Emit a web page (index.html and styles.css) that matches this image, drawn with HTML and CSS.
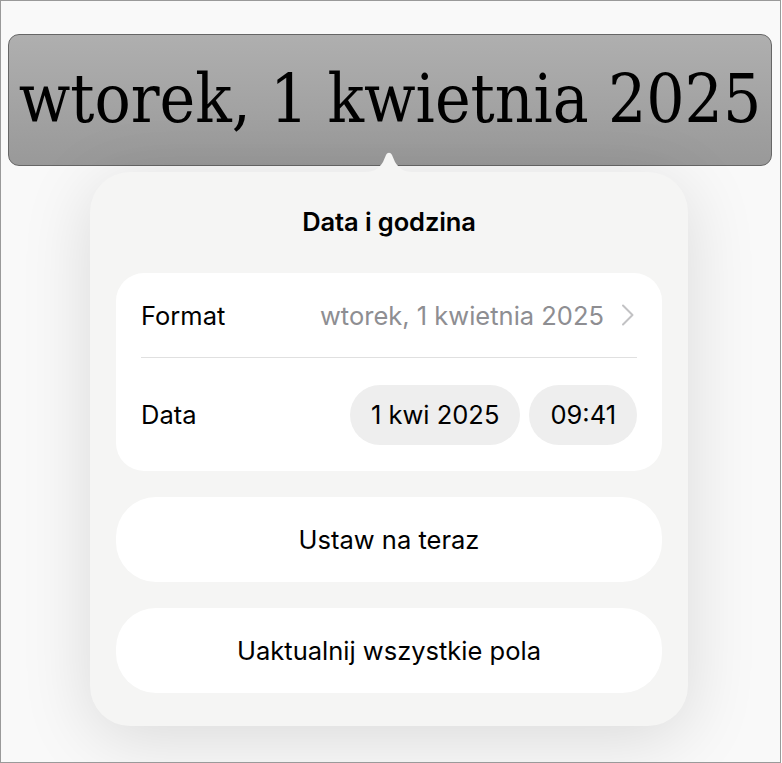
FILE: index.html
```html
<!DOCTYPE html>
<html lang="pl">
<head>
<meta charset="utf-8">
<title>Data i godzina</title>
<link rel="stylesheet" href="styles.css">
</head>
<body>
<div class="frame">
  <div class="field">wtorek, 1 kwietnia 2025</div>
  <div class="popover">
    <svg class="popover-arrow" width="48" height="24" viewBox="0 0 48 24" aria-hidden="true">
      <path d="M0 22 C10 22 14 18 18 12 L21 5 C22.5 2 25.5 2 27 5 L30 12 C34 18 38 22 48 22 L48 24 L0 24 Z" fill="#f5f5f4"/>
    </svg>
    <h1 class="popover-title">Data i godzina</h1>
    <div class="card">
      <div class="row">
        <span class="row-label">Format</span>
        <span class="row-value">wtorek, 1 kwietnia 2025</span>
        <svg class="chevron" width="14" height="22" viewBox="0 0 14 22" aria-hidden="true">
          <path d="M2 1.5 L11.5 11 L2 20.5" fill="none" stroke="#c2c2c4" stroke-width="2" stroke-linecap="round" stroke-linejoin="round"/>
        </svg>
      </div>
      <div class="divider"></div>
      <div class="row">
        <span class="row-label">Data</span>
        <span class="pills">
          <span class="pill">1 kwi 2025</span>
          <span class="pill">09:41</span>
        </span>
      </div>
    </div>
    <button class="action">Ustaw na teraz</button>
    <button class="action">Uaktualnij wszystkie pola</button>
  </div>
</div>
</body>
</html>
```

FILE: styles.css
```css
html, body {
  margin: 0;
  padding: 0;
  background: #ffffff;
}

.frame {
  box-sizing: border-box;
  width: 781px;
  height: 763px;
  border: 1px solid #9a9a9a;
  background: #f9f9f9;
  padding: 33px 8px 0 7px;
  overflow: hidden;
  font-family: Inter, "Noto Sans", sans-serif;
  color: #000;
}

/* selected date field in the document */
.field {
  box-sizing: border-box;
  height: 132px;
  border: 1px solid #666;
  border-radius: 11px;
  background: linear-gradient(#afafaf, #999999);
  font-family: "DejaVu Serif Condensed", "DejaVu Serif", serif;
  font-stretch: condensed;
  font-size: 67px;
  line-height: 129px;
  text-align: center;
  white-space: nowrap;
}

.popover {
  position: relative;
  box-sizing: border-box;
  width: 598px;
  margin: 6px 0 0 82px;
  padding: 30px 26px 33px;
  background: #f5f5f4;
  border-radius: 40px;
  box-shadow: 0 12px 70px rgba(0, 0, 0, 0.13);
  display: flex;
  flex-direction: column;
}

.popover-arrow {
  position: absolute;
  top: -22px;
  left: 275px;
  display: block;
}

.popover-title {
  margin: 0 0 31px;
  font-size: 25.5px;
  font-weight: 600;
  line-height: 40px;
  text-align: center;
  letter-spacing: -0.1px;
}

.card {
  background: #fff;
  border-radius: 28px;
  padding: 0 25px;
  margin-bottom: 26px;
}

.row {
  display: flex;
  align-items: center;
  height: 84px;
  font-size: 25.5px;
}

.row + .divider + .row {
  height: 113px;
}

.row-label {
  flex: 1;
}

.row-value {
  color: #8e8e92;
  margin-right: 17px;
}

.chevron {
  display: block;
  margin-right: 2px;
}

.divider {
  height: 1px;
  background: #e0e0e0;
}

.pills {
  display: flex;
  gap: 9px;
}

.pill {
  background: #eeeeee;
  border-radius: 30px;
  height: 60px;
  line-height: 60px;
  padding: 0 21px;
  font-size: 25.5px;
}

.action {
  display: block;
  width: 100%;
  height: 85px;
  border: none;
  border-radius: 40px;
  background: #fff;
  font-family: inherit;
  font-size: 25.5px;
  color: #000;
  padding: 0;
}

.action + .action {
  margin-top: 26px;
}
```
